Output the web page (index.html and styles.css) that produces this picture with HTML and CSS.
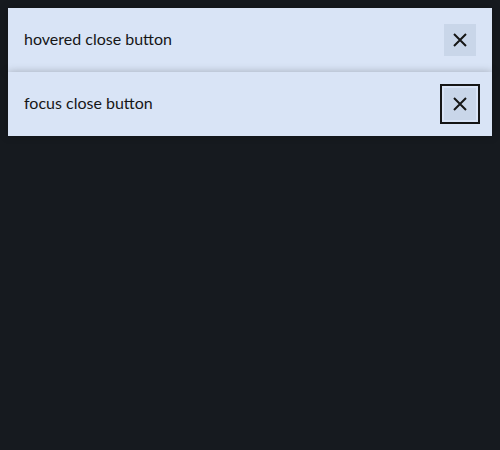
FILE: index.html
```html
<!DOCTYPE html>
<html>
<head>
<meta charset="utf-8">
<link rel="stylesheet" href="styles.css">
</head>
<body>
<div class="stack">
  <div class="toast">
    <span class="title">hovered close button</span>
    <button class="close hover" aria-label="close">
      <svg width="16" height="16" viewBox="0 0 16 16"><path d="M2 2L14 14M14 2L2 14" stroke="#161616" stroke-width="2" fill="none"/></svg>
    </button>
  </div>
  <div class="toast">
    <span class="title">focus close button</span>
    <button class="close focus" aria-label="close">
      <svg width="16" height="16" viewBox="0 0 16 16"><path d="M2 2L14 14M14 2L2 14" stroke="#161616" stroke-width="2" fill="none"/></svg>
    </button>
  </div>
</div>
</body>
</html>
```

FILE: styles.css
```css
html, body {
  margin: 0;
  padding: 0;
}
body {
  background: #161a1f;
  padding: 8px;
  font-family: Lato, "Liberation Sans", sans-serif;
}
.stack {
  display: flex;
  flex-direction: column;
}
.toast {
  position: relative;
  display: flex;
  align-items: center;
  justify-content: space-between;
  height: 64px;
  padding: 0 16px;
  background: #d9e4f6;
  box-shadow: 0 0 8px rgba(0, 0, 0, 0.25);
  color: #161616;
  font-size: 16px;
}
.title {
  line-height: 20px;
  padding-bottom: 3px;
}
.close {
  width: 32px;
  height: 32px;
  padding: 0;
  border: none;
  background: transparent;
  display: flex;
  align-items: center;
  justify-content: center;
}
.close.hover {
  background: #c9d6e9;
}
.close.focus {
  background: #c9d6e9;
  outline: 2px solid #161616;
  outline-offset: 2px;
}
```
